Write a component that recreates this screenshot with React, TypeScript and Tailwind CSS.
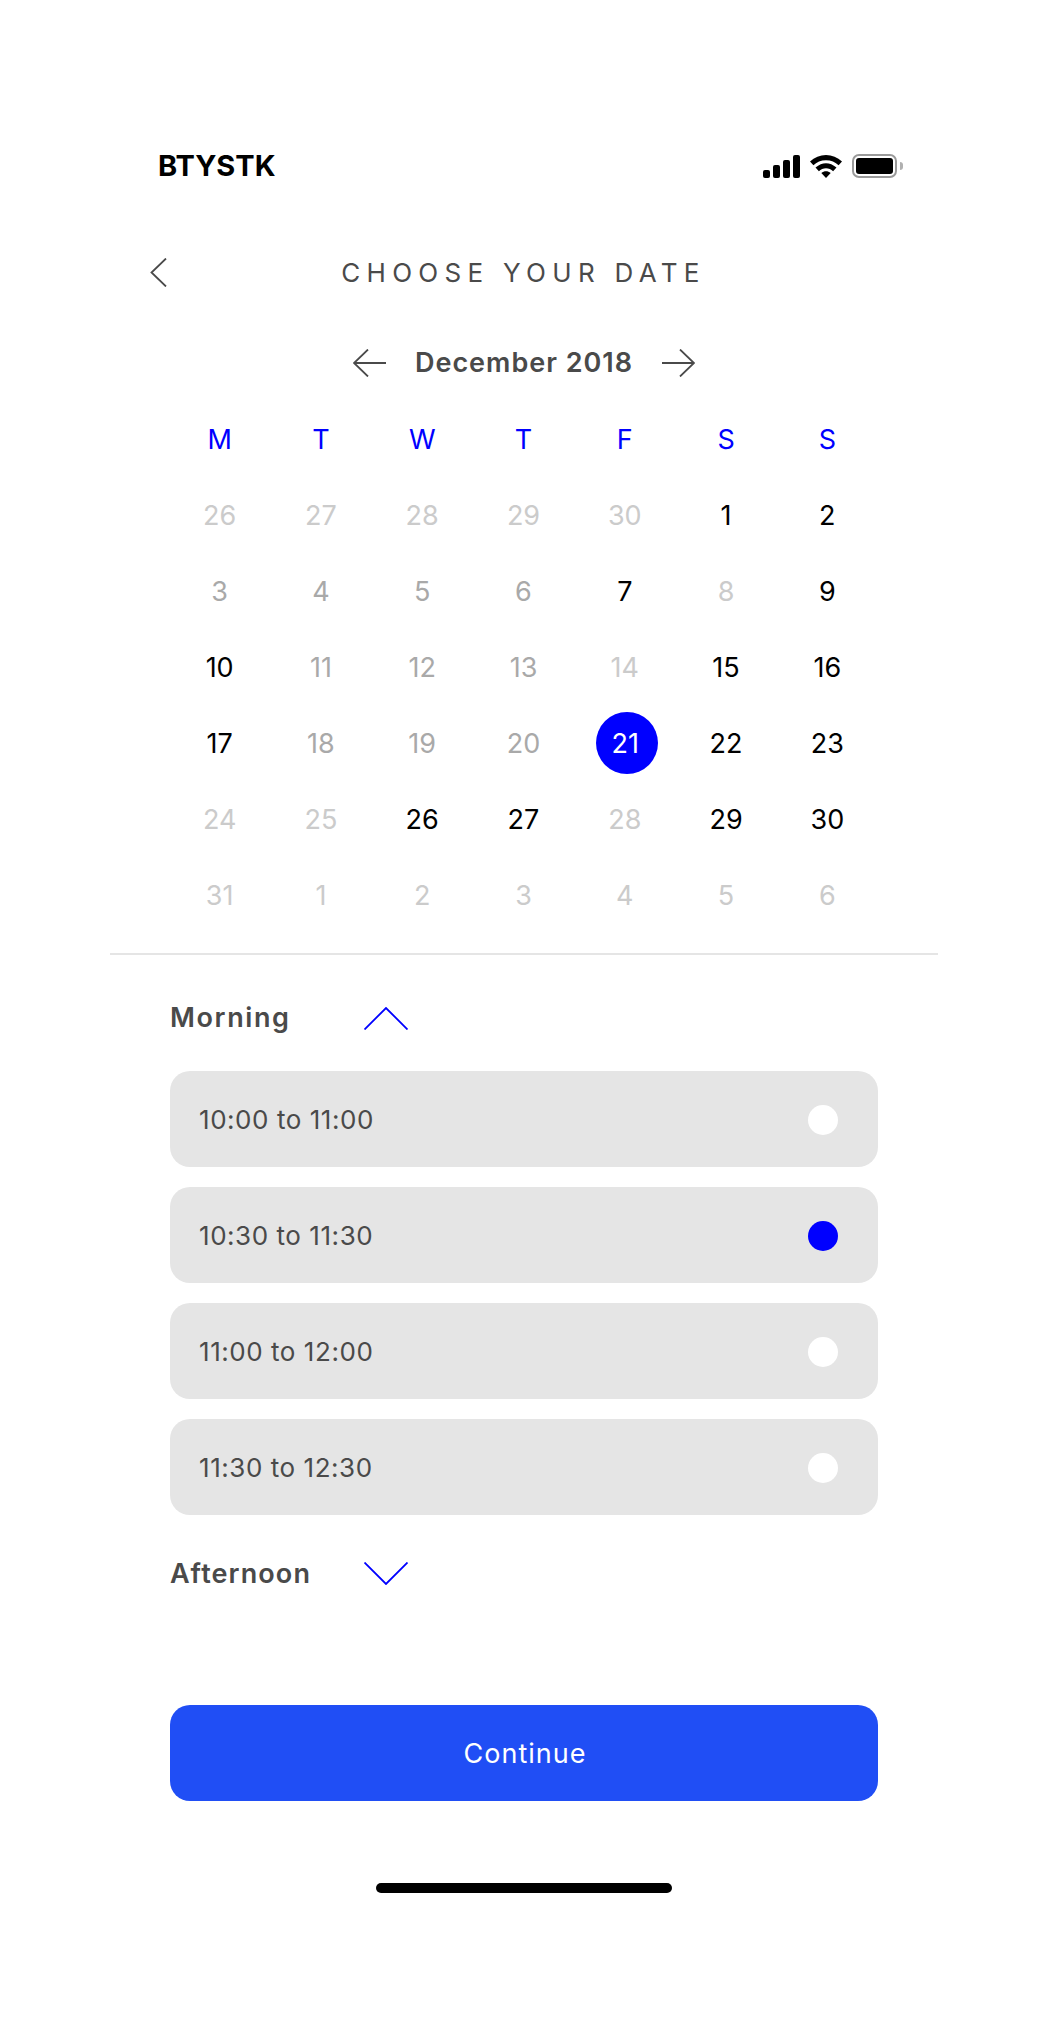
const weekdays = ['M', 'T', 'W', 'T', 'F', 'S', 'S'];

// k = black (available), m = mid grey, l = light grey, s = selected
const days: [string, string][] = [
  ['26', 'l'], ['27', 'l'], ['28', 'l'], ['29', 'l'], ['30', 'l'], ['1', 'k'], ['2', 'k'],
  ['3', 'm'], ['4', 'm'], ['5', 'm'], ['6', 'm'], ['7', 'k'], ['8', 'l'], ['9', 'k'],
  ['10', 'k'], ['11', 'm'], ['12', 'm'], ['13', 'm'], ['14', 'l'], ['15', 'k'], ['16', 'k'],
  ['17', 'k'], ['18', 'm'], ['19', 'm'], ['20', 'm'], ['21', 's'], ['22', 'k'], ['23', 'k'],
  ['24', 'l'], ['25', 'l'], ['26', 'k'], ['27', 'k'], ['28', 'l'], ['29', 'k'], ['30', 'k'],
  ['31', 'l'], ['1', 'l'], ['2', 'l'], ['3', 'l'], ['4', 'l'], ['5', 'l'], ['6', 'l'],
];

const slots = [
  { label: '10:00 to 11:00', active: false },
  { label: '10:30 to 11:30', active: true },
  { label: '11:00 to 12:00', active: false },
  { label: '11:30 to 12:30', active: false },
];

function StatusIcons() {
  return (
    <div className="flex items-center">
      <svg width="37" height="23" viewBox="0 0 37 23" fill="#000">
        <rect x="0" y="15" width="7" height="8" rx="2" />
        <rect x="10" y="10" width="7" height="13" rx="2" />
        <rect x="20" y="5" width="7" height="18" rx="2" />
        <rect x="30" y="0" width="7" height="23" rx="2" />
      </svg>
      <svg className="ml-[10px]" width="32" height="23" viewBox="0 0 32 23" fill="#000">
        <path d="M16 0C10 0 4.500 2.400 0 6.500L3.400 10.200C6.600 7.100 11 5.200 16 5.200C21 5.200 25.400 7.100 28.600 10.200L32 6.500C27.500 2.400 22 0 16 0Z" />
        <path d="M16 8.200C12.400 8.200 9 9.700 5.500 12.500L8.900 16.200C10.800 14.400 13.300 13.300 16 13.300C18.700 13.300 21.200 14.400 23.100 16.200L26.500 12.500C23 9.700 19.600 8.200 16 8.200Z" />
        <path d="M16 16.200C14.300 16.200 12.800 16.800 11.300 18L16 23L20.700 18C19.200 16.800 17.700 16.200 16 16.200Z" />
      </svg>
      <div className="ml-[10px] flex h-[24px] w-[45px] items-center justify-center rounded-[7px] border-2 border-[#9a9a9a]">
        <div className="h-[16px] w-[37px] rounded-[3px] bg-black" />
      </div>
      <div className="ml-[3px] h-[8px] w-[3px] rounded-r-sm bg-[#b0b0b0]" />
    </div>
  );
}

function Arrow({ flip }: { flip?: boolean }) {
  return (
    <svg
      width="33"
      height="28"
      viewBox="0 0 33 28"
      fill="none"
      stroke="#4a4a4a"
      strokeWidth="1.8"
      className={flip ? 'rotate-180' : ''}
    >
      <path d="M15 0.500L1 14L15 27.500M1 14H33" />
    </svg>
  );
}

function Caret({ up }: { up?: boolean }) {
  return (
    <svg width="44" height="23" viewBox="0 0 44 23" fill="none" stroke="#0000ff" strokeWidth="1.8">
      <path d={up ? 'M0.500 22.500L22 1L43.500 22.500' : 'M0.500 0.500L22 22L43.500 0.500'} />
    </svg>
  );
}

function DayCell({ label, kind }: { label: string; kind: string }) {
  if (kind === 's') {
    return (
      <div className="flex items-center justify-center">
        <div className="-mt-[3px] ml-[4px] flex h-[62px] w-[62px] items-center justify-center rounded-full bg-[#0000ff] pr-[3px] pt-[3px] text-white">
          {label}
        </div>
      </div>
    );
  }
  const color = kind === 'k' ? 'text-black' : kind === 'm' ? 'text-[#a9a9a9]' : 'text-[#cbcbcb]';
  return <div className={`flex items-center justify-center ${color}`}>{label}</div>;
}

export default function App() {
  return (
    <div className="flex h-[2025px] w-[1048px] flex-col overflow-hidden bg-white pt-[146px] font-['Inter',sans-serif] text-[#4a4a4a]">
      <div className="flex h-[40px] items-center justify-between pl-[158px] pr-[145px]">
        <span className="text-[29px] font-bold text-black">BTYSTK</span>
        <StatusIcons />
      </div>

      <div className="mt-[66px] flex h-[40px] items-center pl-[150px] pr-[168px]">
        <svg width="17" height="29" viewBox="0 0 17 29" fill="none" stroke="#4a4a4a" strokeWidth="1.8">
          <path d="M16 0.500L1.500 14.500L16 28.500" />
        </svg>
        <h1 className="flex-1 text-center text-[26px] tracking-[6.3px]">CHOOSE YOUR DATE</h1>
      </div>

      <div className="mt-[51px] flex h-[40px] items-center justify-center gap-[29px]">
        <Arrow />
        <span className="pt-[1px] text-[27px] font-semibold tracking-[1px]">December 2018</span>
        <Arrow flip />
      </div>

      <div className="ml-[169px] mr-[170px] mt-[19px] grid grid-cols-7 auto-rows-[76px] text-[27px]">
        {weekdays.map((d, i) => (
          <div key={i} className="flex items-center justify-center text-[#0000ff]">
            {d}
          </div>
        ))}
        {days.map(([label, kind], i) => (
          <DayCell key={i} label={label} kind={kind} />
        ))}
      </div>

      <div className="mx-[110px] mt-[19px] h-[2px] bg-[#e5e5e5]" />

      <div className="mt-[43px] flex h-[40px] items-center pl-[170px]">
        <span className="w-[194px] text-[27px] font-semibold tracking-[1.6px]">Morning</span>
        <Caret up />
      </div>

      <div className="mx-[170px] mt-[33px] flex flex-col gap-[20px]">
        {slots.map((slot) => (
          <div
            key={slot.label}
            className="flex h-[96px] items-center justify-between rounded-[20px] bg-[#e5e5e5] pl-[29px] pr-[40px] text-[26px] tracking-[0.55px]"
          >
            <span>{slot.label}</span>
            <span className={`mt-[2px] h-[30px] w-[30px] rounded-full ${slot.active ? 'bg-[#0000ff]' : 'bg-white'}`} />
          </div>
        ))}
      </div>

      <div className="mt-[38px] flex h-[40px] items-center pl-[170px]">
        <span className="w-[194px] pt-[2px] text-[27px] font-semibold tracking-[1.1px]">Afternoon</span>
        <Caret />
      </div>

      <button className="mx-[170px] mt-[112px] h-[96px] rounded-[20px] bg-[#204ef5] pl-[2px] pt-[2px] text-[27px] tracking-[1px] text-white">
        Continue
      </button>

      <div className="mx-auto mt-[82px] h-[10px] w-[296px] rounded-full bg-black" />
    </div>
  );
}
